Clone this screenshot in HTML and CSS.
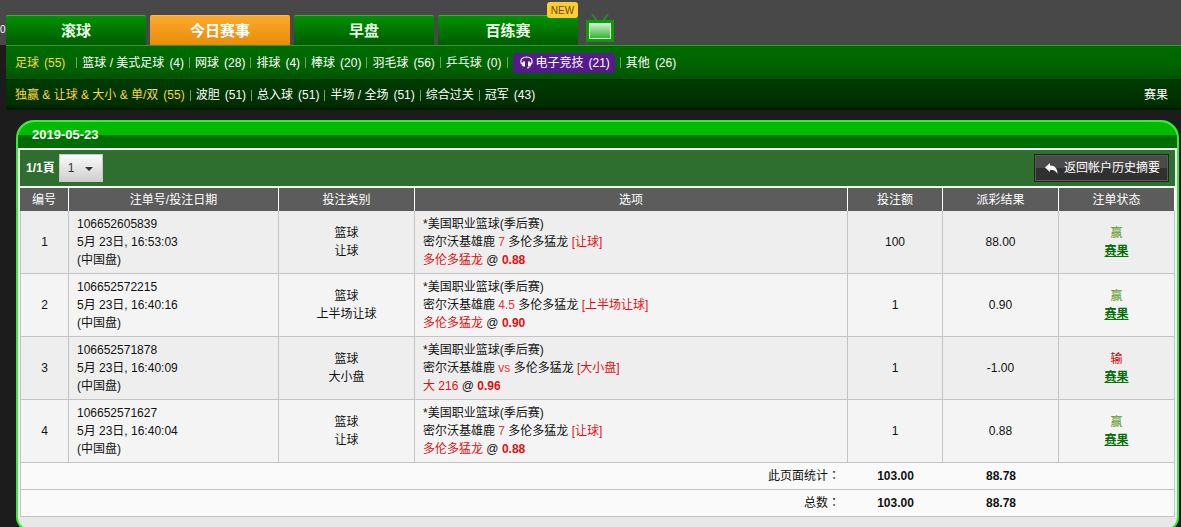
FILE: index.html
```
<!DOCTYPE html>
<html lang="zh-CN">

<head>
    <meta charset="UTF-8">
    <meta name="viewport" content="width=device-width, initial-scale=1.0">
    <title>帐户历史 - 2019-05-23</title>
    <link rel="stylesheet" href="styles.css">
</head>

<body>
    <header class="top">
        <span class="top-edge">0</span>
        <nav class="tabs">
            <a class="tab" href="#">滚球</a>
            <a class="tab active" href="#">今日赛事</a>
            <a class="tab" href="#">早盘</a>
            <a class="tab" href="#">百练赛<span class="new-badge">NEW</span></a>
            <a class="tv" href="#" aria-label="TV">
                <svg width="28" height="29" viewBox="0 0 28 29">
                    <defs>
                        <linearGradient id="tv-screen" x1="0" y1="0" x2="0" y2="1">
                            <stop offset="0" stop-color="#d2f0d2" />
                            <stop offset="1" stop-color="#2cb42c" />
                        </linearGradient>
                    </defs>
                    <path d="M6 1l5 7M22 1l-5 7" stroke="#239023" stroke-width="2" fill="none" />
                    <rect y="7" width="28" height="22" fill="#06a006" />
                    <rect x="3.500" y="10.500" width="21" height="15" fill="url(#tv-screen)" stroke="#e8ffe8" />
                </svg>
            </a>
        </nav>
    </header>

    <nav class="sports">
        <ul class="menu">
            <li class="current"><a href="#">足球<span>(55)</span></a></li>
            <li><a href="#">篮球 / 美式足球<span>(4)</span></a></li>
            <li><a href="#">网球<span>(28)</span></a></li>
            <li><a href="#">排球<span>(4)</span></a></li>
            <li><a href="#">棒球<span>(20)</span></a></li>
            <li><a href="#">羽毛球<span>(56)</span></a></li>
            <li><a href="#">乒乓球<span>(0)</span></a></li>
            <li>
                <a class="esports" href="#">
                    <svg width="13" height="13" viewBox="0 0 13 13">
                        <path d="M1.500 8C-.5 3 3 1 6.500 1s7 2 5 7" fill="none" stroke="#fff" stroke-width="1.200" />
                        <path d="M3 5.500h2v5H3.500L1.500 9zM10 5.500H8v5h1.500L11.500 9z" fill="#fff" />
                        <path d="M10 10.500Q9.500 12 7 12" fill="none" stroke="#fff" />
                    </svg>电子竞技<span>(21)</span>
                </a>
            </li>
            <li><a href="#">其他<span>(26)</span></a></li>
        </ul>
    </nav>

    <nav class="markets">
        <ul class="menu">
            <li class="current"><a href="#">独赢 &amp; 让球 &amp; 大小 &amp; 单/双<span>(55)</span></a></li>
            <li><a href="#">波胆<span>(51)</span></a></li>
            <li><a href="#">总入球<span>(51)</span></a></li>
            <li><a href="#">半场 / 全场<span>(51)</span></a></li>
            <li><a href="#">综合过关</a></li>
            <li><a href="#">冠军<span>(43)</span></a></li>
        </ul>
        <a class="result" href="#">赛果</a>
    </nav>

    <main class="panel">
        <h1 class="panel-title">2019-05-23</h1>
        <div class="toolbar">
            <label for="page">1/1頁</label>
            <div class="page-select">
                <select id="page">
                    <option>1</option>
                </select>
            </div>
            <button class="back-btn" type="button">
                <svg width="13" height="11" viewBox="0 0 13 11">
                    <path d="M0 4.500L5 0v2.500c5 0 7.500 3 7.500 8.500C11 8 9 6.800 5 6.800V9z" fill="#fff" />
                </svg>返回帐户历史摘要
            </button>
        </div>
        <table class="bets">
            <colgroup>
                <col class="col-no">
                <col class="col-id">
                <col class="col-type">
                <col>
                <col class="col-stake">
                <col class="col-payout">
                <col class="col-status">
            </colgroup>
            <thead>
                <tr>
                    <th>编号</th>
                    <th>注单号/投注日期</th>
                    <th>投注类别</th>
                    <th>选项</th>
                    <th>投注额</th>
                    <th>派彩结果</th>
                    <th>注单状态</th>
                </tr>
            </thead>
            <tbody>
                <tr>
                    <td>1</td>
                    <td class="left">106652605839<br>5月 23日, 16:53:03<br>(中国盘)</td>
                    <td>篮球<br>让球</td>
                    <td class="left">*美国职业篮球(季后赛)<br>密尔沃基雄鹿 <i>7</i> 多伦多猛龙 <em>[让球]</em><br><em>多伦多猛龙</em> @ <b>0.88</b></td>
                    <td>100</td>
                    <td>88.00</td>
                    <td><span class="win">赢</span><br><a href="#">赛果</a></td>
                </tr>
                <tr>
                    <td>2</td>
                    <td class="left">106652572215<br>5月 23日, 16:40:16<br>(中国盘)</td>
                    <td>篮球<br>上半场让球</td>
                    <td class="left">*美国职业篮球(季后赛)<br>密尔沃基雄鹿 <i>4.5</i> 多伦多猛龙 <em>[上半场让球]</em><br><em>多伦多猛龙</em> @ <b>0.90</b></td>
                    <td>1</td>
                    <td>0.90</td>
                    <td><span class="win">赢</span><br><a href="#">赛果</a></td>
                </tr>
                <tr>
                    <td>3</td>
                    <td class="left">106652571878<br>5月 23日, 16:40:09<br>(中国盘)</td>
                    <td>篮球<br>大小盘</td>
                    <td class="left">*美国职业篮球(季后赛)<br>密尔沃基雄鹿 <i>vs</i> 多伦多猛龙 <em>[大小盘]</em><br><em>大 216</em> @ <b>0.96</b></td>
                    <td>1</td>
                    <td>-1.00</td>
                    <td><span class="lose">输</span><br><a href="#">赛果</a></td>
                </tr>
                <tr>
                    <td>4</td>
                    <td class="left">106652571627<br>5月 23日, 16:40:04<br>(中国盘)</td>
                    <td>篮球<br>让球</td>
                    <td class="left">*美国职业篮球(季后赛)<br>密尔沃基雄鹿 <i>7</i> 多伦多猛龙 <em>[让球]</em><br><em>多伦多猛龙</em> @ <b>0.88</b></td>
                    <td>1</td>
                    <td>0.88</td>
                    <td><span class="win">赢</span><br><a href="#">赛果</a></td>
                </tr>
            </tbody>
            <tfoot>
                <tr>
                    <td class="sum-label" colspan="4" lang="zh-TW">此页面统计：</td>
                    <td>103.00</td>
                    <td>88.78</td>
                    <td></td>
                </tr>
                <tr>
                    <td class="sum-label" colspan="4" lang="zh-TW">总数：</td>
                    <td>103.00</td>
                    <td>88.78</td>
                    <td></td>
                </tr>
            </tfoot>
        </table>
    </main>
</body>

</html>
```
FILE: styles.css
```
* {
    box-sizing: border-box;
}

body {
    margin: 0;
    height: 100vh;
    overflow: hidden;
    background-color: #1c1c1c;
    font-family: "Liberation Sans", "Noto Sans CJK SC", sans-serif;
    font-size: 12px;
    line-height: 18px;
    color: #111;
}

a {
    color: inherit;
    text-decoration: none;
}

/* 顶部标签 */
.top {
    display: flex;
    align-items: flex-end;
    height: 45px;
    background-color: #484848;
}

.top-edge {
    width: 6px;
    margin-bottom: 6px;
    color: #fff;
    font-size: 10px;
}

.tabs {
    display: flex;
    align-items: flex-end;
    gap: 4px;
}

.tab {
    position: relative;
    width: 140px;
    height: 30px;
    line-height: 29px;
    border-top: 1px solid #4da54d;
    border-radius: 2px 2px 0 0;
    background: linear-gradient(#009200, #005a00);
    color: #e6ffe6;
    font-size: 15px;
    font-weight: bold;
    text-align: center;
}

.tab.active {
    border-top-color: #ffb84a;
    background: linear-gradient(#fba92d, #ea8c08);
    color: #fff;
}

.new-badge {
    position: absolute;
    top: -14px;
    right: 0;
    width: 31px;
    height: 16px;
    border-radius: 3px;
    background-color: #ffcc33;
    color: #6b4a10;
    font-size: 10px;
    font-weight: normal;
    line-height: 17px;
}

.tv {
    margin-left: 4px;
    padding-bottom: 3px;
}

.tv svg {
    display: block;
}

/* 球类与玩法菜单 */
.sports,
.markets {
    display: flex;
    align-items: center;
    justify-content: space-between;
    margin-left: 6px;
    padding: 0 13px 0 9px;
    color: #fff;
}

.sports {
    height: 34px;
    border-top: 1px solid #1ea51e;
    background: linear-gradient(#006b00, #006600 50%, #005500);
}

.markets {
    height: 31px;
    border-top: 1px solid #001c00;
    background: linear-gradient(#003c00, #002e00 80%, #001c00);
}

.menu {
    display: flex;
    align-items: center;
    margin: 0;
    padding: 0;
    list-style: none;
}

.menu li {
    display: flex;
    align-items: center;
}

.menu li + li::before {
    content: "";
    width: 1px;
    height: 11px;
    margin: 0 5px;
    background-color: #6fa06f;
}

.menu span {
    margin-left: 5px;
}

.menu .current {
    color: #ffd83a;
}

.sports .current {
    margin-right: 6px;
}

.menu .esports {
    display: flex;
    align-items: center;
    height: 20px;
    padding: 0 5px 0 7px;
    border-radius: 3px;
    background-color: #551a8b;
}

.esports svg {
    margin-right: 3px;
}

/* 内容面板 */
.panel {
    margin: 10px 2px 0 16px;
    padding-bottom: 12px;
    border: 2px solid #33ee33;
    border-radius: 18px 18px 14px 14px;
    background-color: #e8e8e8;
    overflow: hidden;
}

.panel-title {
    height: 26px;
    margin: 0;
    padding-left: 14px;
    background: linear-gradient(#00bb00 50%, #006d00 50%);
    color: #fff;
    font-size: 13px;
    line-height: 26px;
}

.toolbar {
    display: flex;
    align-items: center;
    height: 40px;
    padding: 0 6px;
    border: 2px solid #f4fff4;
    background-color: #2e6e2e;
    color: #fff;
}

.toolbar label {
    font-weight: bold;
}

.page-select {
    position: relative;
    margin-left: 4px;
}

.page-select::after {
    content: "";
    position: absolute;
    top: 13px;
    right: 10px;
    border: 4px solid transparent;
    border-top-color: #333;
    border-bottom: 0;
    pointer-events: none;
}

.page-select select {
    display: block;
    appearance: none;
    width: 44px;
    height: 28px;
    padding: 0 8px;
    border: 1px solid #c8c8c8;
    border-radius: 0;
    background: linear-gradient(#fafafa, #cfcfcf);
    color: #333;
    font: inherit;
}

.back-btn {
    display: flex;
    align-items: center;
    gap: 6px;
    height: 28px;
    margin-left: auto;
    padding: 0 8px 0 10px;
    border: 1px solid #222;
    background: linear-gradient(#4a4a4a 50%, #303030 50%);
    box-shadow: inset 0 0 0 1px #5a5a5a;
    color: #fff;
    font: inherit;
    cursor: pointer;
}

/* 注单表格 */
.bets {
    width: 100%;
    table-layout: fixed;
    border-collapse: separate;
    border-spacing: 0;
    border: solid #f4fff4;
    border-width: 0 2px;
}

.col-no {
    width: 49px;
}

.col-id {
    width: 210px;
}

.col-type {
    width: 136px;
}

.col-stake {
    width: 95px;
}

.col-payout,
.col-status {
    width: 116px;
}

.bets th {
    height: 23px;
    padding: 0;
    border-right: 1px solid #fff;
    background-color: #5c5c5c;
    color: #fff;
    font-weight: normal;
}

.bets td {
    padding: 4px 8px;
    border-right: 1px solid #c4c4c4;
    border-bottom: 1px solid #c4c4c4;
    background-color: #eee;
    text-align: center;
}

.bets tbody tr:nth-child(even) td {
    background-color: #f4f4f4;
}

.bets td:first-child {
    border-left: 1px solid #c4c4c4;
}

.bets td.left {
    text-align: left;
}

.bets i,
.bets em {
    color: #dd1111;
    font-style: normal;
}

.bets i {
    color: #e03a3a;
}

.bets b {
    color: #dd1111;
}

.bets td a {
    color: #067006;
    font-weight: bold;
    text-decoration: underline;
}

.bets .win {
    color: #5a9a1e;
}

.bets .lose {
    color: #cc0000;
}

.bets tfoot td {
    border-right: 0;
    background-color: #fafafa;
    font-weight: bold;
}

.bets tfoot td:last-child {
    border-right: 1px solid #c4c4c4;
}

.bets tfoot td.sum-label {
    font-family: "Liberation Sans", "Noto Sans CJK TC", sans-serif;
    font-weight: normal;
    text-align: right;
}
```
